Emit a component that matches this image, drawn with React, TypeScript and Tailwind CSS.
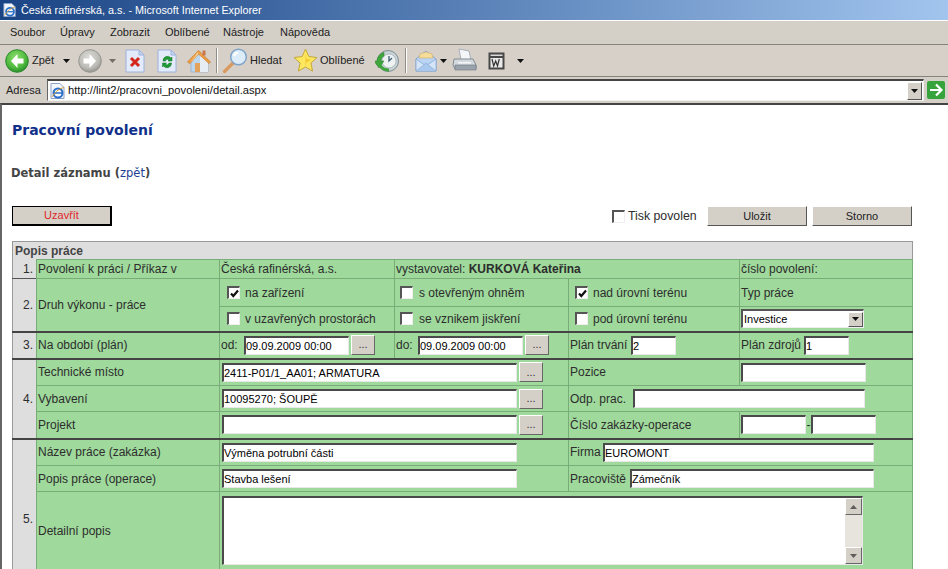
import type { ReactNode } from "react";

const sans = "font-['Liberation_Sans',Arial,sans-serif]";

function Arrow({ className = "" }: { className?: string }) {
  return (
    <svg className={className} width="7" height="4" viewBox="0 0 7 4" aria-hidden>
      <path d="M0 0h7L3.500 4z" fill="#111" />
    </svg>
  );
}

function RoundNav({ grey, dir }: { grey?: boolean; dir: "l" | "r" }) {
  const id = grey ? "navg" : "navc";
  return (
    <svg width="24" height="24" viewBox="0 0 24 24" aria-hidden>
      <defs>
        <radialGradient id={id} cx="45%" cy="35%" r="70%">
          <stop offset="0" stopColor={grey ? "#dcdcd8" : "#8fe070"} />
          <stop offset="0.65" stopColor={grey ? "#bdbcb7" : "#4db83c"} />
          <stop offset="1" stopColor={grey ? "#8b8a85" : "#22842a"} />
        </radialGradient>
      </defs>
      <circle cx="12" cy="12" r="11.300" fill={`url(#${id})`} stroke={grey ? "#96958f" : "#2f8a30"} />
      <path
        d={dir === "l" ? "M12.500 5 6 12l6.500 7v-4.500h6v-5h-6z" : "M11.500 5 18 12l-6.500 7v-4.500h-6v-5h6z"}
        fill="#fff"
      />
    </svg>
  );
}

function PageIcon({ children }: { children: ReactNode }) {
  return (
    <svg width="20" height="24" viewBox="0 0 20 24" aria-hidden>
      <path d="M1 1h13l5 5v17H1z" fill="#e3ebfa" stroke="#9db2dc" />
      <path d="M14 1v5h5z" fill="#c6d4f0" stroke="#9db2dc" />
      {children}
    </svg>
  );
}

function HomeIcon() {
  return (
    <svg width="24" height="24" viewBox="0 0 24 24" aria-hidden>
      <path d="M4 11v12h17V11l-8-7z" fill="#bcd6ee" stroke="#8ba7c4" strokeWidth="0.700" />
      <path d="M13 5 21 12v11h-8z" fill="#e6edf4" />
      <path d="M0.500 13 11.500 1.500 23.500 13l-1.500 1.500L11.500 5 3 14.500z" fill="#f0a045" stroke="#c47a2a" strokeWidth="0.700" />
      <path d="M3 14.500 11.500 5l-1-2z" fill="#f8c98a" />
      <rect x="15.500" y="1.500" width="3" height="5" fill="#c9764a" />
      <rect x="8" y="14" width="5" height="9" fill="#e2a25a" />
    </svg>
  );
}

function SearchIcon() {
  return (
    <svg width="26" height="26" viewBox="0 0 26 26" aria-hidden>
      <path d="M11 15 2.500 23.500" stroke="#d99a5f" strokeWidth="3.200" strokeLinecap="round" />
      <circle cx="16.500" cy="9" r="7.800" fill="#dcecf9" stroke="#7fa3c8" strokeWidth="1.500" />
      <path d="M12 8a5 5 0 0 1 4-3.500" stroke="#fff" strokeWidth="2" fill="none" />
    </svg>
  );
}

function StarIcon() {
  return (
    <svg width="25" height="25" viewBox="0 0 25 25" aria-hidden>
      <path
        d="m12.500 1 3.400 7.600 8.100.9-6.100 5.500 1.700 8.100-7.100-4.100-7.100 4.100 1.700-8.100L1 9.500l8.100-.9z"
        fill="#fce75e"
        stroke="#c4a83a"
      />
      <path d="m12.500 5 1 6 5 1-5 2-1 5z" fill="#f3c52e" />
    </svg>
  );
}

function MediaIcon() {
  return (
    <svg width="24" height="24" viewBox="0 0 24 24" aria-hidden>
      <circle cx="13" cy="12" r="10.500" fill="#c9d3d6" stroke="#7e8f96" />
      <circle cx="14" cy="12" r="7" fill="#eef2f3" stroke="#8fa0a6" strokeWidth="0.600" />
      <path d="M14 7v5l3-3" stroke="#3f5f76" strokeWidth="1.300" fill="none" />
      <path d="M2 12c0-4 3-7.500 7-8.500V7c-2 .8-3 2.800-3 5h3l-5 7-5-7z" fill="#3ea63b" stroke="#2a7a2d" strokeWidth="0.500" />
      <path d="M6 15c1.500 3 4 4.500 8 4.500v3c-5 0-9-2.500-10.500-6.500z" fill="#3ea63b" />
    </svg>
  );
}

function MailIcon() {
  return (
    <svg width="25" height="24" viewBox="0 0 25 24" aria-hidden>
      <path d="M2 10 12 2l10 8v12H2z" fill="#b9d4f4" stroke="#8aa8cf" />
      <path d="M5 9h14l-1-4-6-2-6 2z" fill="#f6dc9a" stroke="#cfae63" strokeWidth="0.600" />
      <path d="M2 10l10 7 10-7v12H2z" fill="#d4e5f9" stroke="#8aa8cf" strokeWidth="0.800" />
      <path d="m2 22 10-8 10 8" fill="#a9c8ee" stroke="#8aa8cf" strokeWidth="0.600" />
    </svg>
  );
}

function PrintIcon() {
  return (
    <svg width="25" height="25" viewBox="0 0 25 25" aria-hidden>
      <path d="M7 1l10 2 2 9H9z" fill="#f4f6f8" stroke="#a7afb8" />
      <path d="M2 11h19l3 6v4H3l-2-4z" fill="#d3d8dc" stroke="#838b93" />
      <path d="M3 17h21v5H3z" fill="#9aa3ab" stroke="#6f777f" strokeWidth="0.600" />
      <path d="M6 14h13v1.500H6z" fill="#f2f4f5" />
    </svg>
  );
}

function WordIcon() {
  return (
    <svg width="17" height="18" viewBox="0 0 17 18" aria-hidden>
      <rect x="0.500" y="0.500" width="16" height="17" fill="#484848" />
      <rect x="2.500" y="2.500" width="12" height="1.500" fill="#d8d8d8" />
      <rect x="2.500" y="6" width="12" height="9.500" fill="#e9e9e9" />
      <path d="m4 7 1.700 7 2-5 1.800 5 1.800-7" stroke="#333" strokeWidth="1.200" fill="none" />
    </svg>
  );
}

function IeIcon({ size }: { size: number }) {
  return (
    <svg width={size} height={size} viewBox="0 0 16 16" aria-hidden>
      <path d="M1 .500h9l4 4v11H1z" fill="#f3f6fc" stroke="#8ea2c8" />
      <circle cx="8" cy="10" r="4.500" fill="#fff" stroke="#2a6fc9" strokeWidth="2" />
      <path d="M3.500 10h9" stroke="#2a6fc9" strokeWidth="1.500" />
      <path d="M2 14c2-4 6-8 12-9.500" stroke="#d79a2a" strokeWidth="0.900" fill="none" />
    </svg>
  );
}

function Check({ on }: { on?: boolean }) {
  return (
    <span className="flex h-[13px] w-[13px] shrink-0 items-center justify-center border-t-2 border-l-2 border-t-[#555] border-l-[#555] border-r border-b border-r-[#eee] border-b-[#eee] bg-white">
      {on && (
        <svg width="9" height="9" viewBox="0 0 9 9" aria-hidden>
          <path d="M1 4.500 3.300 7 8 1.500" stroke="#111" strokeWidth="2.200" fill="none" />
        </svg>
      )}
    </span>
  );
}

function Field({ value, className = "" }: { value?: string; className?: string }) {
  return (
    <input
      readOnly
      value={value ?? ""}
      className={`h-[19px] shrink-0 border-t-2 border-l-2 border-t-[#4a4a4a] border-l-[#4a4a4a] border-r border-b border-r-[#e8e8e8] border-b-[#e8e8e8] bg-white px-0 text-[11px] text-black outline-none ${sans} ${className}`}
    />
  );
}

function Dots({ className = "" }: { className?: string }) {
  return (
    <span
      className={`flex h-[20px] w-[24px] shrink-0 items-center justify-center border border-t-[#fff] border-l-[#fff] border-r-[#666] border-b-[#666] bg-[#d4d0c8] pb-px text-[11px] text-[#333] ${className}`}
    >
      ...
    </span>
  );
}

function Btn({ children, className = "" }: { children: ReactNode; className?: string }) {
  return (
    <button className={`h-[20px] w-[100px] border border-t-[#fff] border-l-[#fff] border-r-[#555] border-b-[#555] bg-[#d4d0c8] text-[11px] text-[#222] ${className}`}>
      {children}
    </button>
  );
}

function Num({ n, rows }: { n: string; rows?: number }) {
  return (
    <td rowSpan={rows} className="bg-[#dedede] pr-[3px] text-right align-middle">
      {n}
    </td>
  );
}

const cell = "border border-[#78ad78] px-px align-middle whitespace-nowrap";

export default function App() {
  return (
    <div className={`h-[569px] w-[948px] overflow-hidden bg-white text-[12px] text-[#2d2d2d] ${sans}`}>
      {/* title bar */}
      <div className="flex h-[20px] items-center gap-[4px] bg-gradient-to-r from-[#1a4484] via-[#5a82b8] to-[#a2c5ee] pl-[3px] text-[10.800px] text-white">
        <IeIcon size={14} />
        <span>Česká rafinérská, a.s. - Microsoft Internet Explorer</span>
      </div>

      {/* menu */}
      <div className="flex h-[25px] items-center border-t border-t-white border-b border-b-[#85837c] bg-[#d4d0c8] pl-[10px] text-[11px] text-[#222]">
        <span className="w-[50px]">Soubor</span>
        <span className="w-[50px]">Úpravy</span>
        <span className="w-[55px]">Zobrazit</span>
        <span className="w-[58px]">Oblíbené</span>
        <span className="w-[57px]">Nástroje</span>
        <span>Nápověda</span>
      </div>

      {/* toolbar */}
      <div className="flex h-[32px] items-center border-b border-b-[#85837c] bg-[#d6d0c8] pl-[5px] text-[11px] text-[#222]">
        <RoundNav dir="l" />
        <span className="ml-[3px] w-[31px]">Zpět</span>
        <Arrow />
        <span className="ml-[8px]">
          <RoundNav grey dir="r" />
        </span>
        <Arrow className="ml-[7px] opacity-50" />
        <span className="ml-[9px]">
          <PageIcon>
            <path d="m6 9 8 8m0-8-8 8" stroke="#d4281c" strokeWidth="3" />
          </PageIcon>
        </span>
        <span className="ml-[12px]">
          <PageIcon>
            <path d="M6 12a4.500 4.500 0 0 1 8-3l1-1v4h-4l1-1a2 2 0 0 0-3.500 1zM14.500 14a4.500 4.500 0 0 1-8 3l-1 1v-4h4l-1 1a2 2 0 0 0 3.500-1z" fill="#1f9a35" stroke="#14762a" strokeWidth="0.500" />
          </PageIcon>
        </span>
        <span className="ml-[10px]">
          <HomeIcon />
        </span>
        <span className="ml-[5px] h-[25px] w-[2px] border-l border-l-[#8f8d86] border-r border-r-white" />
        <span className="ml-[4px]">
          <SearchIcon />
        </span>
        <span className="ml-[2px] w-[43px]">Hledat</span>
        <StarIcon />
        <span className="ml-[2px] w-[55px]">Oblíbené</span>
        <MediaIcon />
        <span className="ml-[6px] h-[25px] w-[2px] border-l border-l-[#8f8d86] border-r border-r-white" />
        <span className="ml-[7px]">
          <MailIcon />
        </span>
        <Arrow className="ml-[1px]" />
        <span className="ml-[5px]">
          <PrintIcon />
        </span>
        <span className="ml-[11px]">
          <WordIcon />
        </span>
        <Arrow className="ml-[12px]" />
      </div>

      {/* address bar */}
      <div className="flex h-[26px] items-center bg-[#d4d0c8] pl-[6px] text-[11px] text-[#222]">
        <span className="w-[41px]">Adresa</span>
        <div className="flex h-[22px] w-[877px] items-center border-t-2 border-l border-t-[#444] border-l-[#666] border-b border-r border-b-[#eee] border-r-[#eee] bg-white pl-[2px]">
          <IeIcon size={16} />
          <span className="ml-[2px] flex-1 text-[11.200px] text-[#111]">http://lint2/pracovni_povoleni/detail.aspx</span>
          <span className="mr-px flex h-[18px] w-[15px] items-center justify-center border border-t-white border-l-white border-r-[#555] border-b-[#555] bg-[#d4d0c8]">
            <Arrow />
          </span>
        </div>
        <svg className="ml-[3px]" width="18" height="18" viewBox="0 0 18 18" aria-hidden>
          <rect width="18" height="18" rx="2" fill="#37a33c" />
          <path d="M9 3.500 14.500 9 9 14.500M3 9h10" stroke="#fff" strokeWidth="2.200" fill="none" />
        </svg>
      </div>

      {/* page */}
      <div className="h-[466px] border-t-2 border-l-2 border-t-[#444] border-l-[#666] pl-[10px]">
        <h1 className="pt-[16px] font-['DejaVu_Sans',Verdana,sans-serif] text-[14px] leading-[18px] font-bold text-[#10308a]">
          Pracovní povolení
        </h1>
        <p className="pt-[26px] -ml-px font-['DejaVu_Sans',Verdana,sans-serif] text-[11.500px] leading-[16px] font-bold text-[#444]">
          Detail záznamu (<a className="font-normal text-[#1c3f94]">zpět</a>)
        </p>
        <div className="mt-[25px] flex h-[20px] w-[900px] items-center justify-between">
          <button className="h-[20px] w-[100px] border border-r-2 border-b-2 border-black bg-[#d4d0c8] text-[11px] text-[#e0262a]">
            Uzavřít
          </button>
          <div className="flex items-center">
            <Check />
            <span className="ml-[3px] w-[79px] text-[12.300px]">Tisk povolen</span>
            <Btn>Uložit</Btn>
            <Btn className="ml-[5px]">Storno</Btn>
          </div>
        </div>

        <table className="mt-[15px] w-[900px] table-fixed border-collapse border border-[#999]">
          <colgroup>
            <col className="w-[24px]" />
            <col className="w-[183px]" />
            <col className="w-[175px]" />
            <col className="w-[174px]" />
            <col className="w-[171px]" />
            <col className="w-[173px]" />
          </colgroup>
          <tbody className="bg-[#9fd99c]">
            <tr className="h-[18px]">
              <td colSpan={6} className="bg-[#dedede] pt-px pl-[2px] leading-[16px] font-bold text-[#444]">
                Popis práce
              </td>
            </tr>
            <tr className="h-[19px] border-b border-b-[#555]">
              <Num n="1." />
              <td className={cell}>Povolení k práci / Příkaz v</td>
              <td className={cell}>Česká rafinérská, a.s.</td>
              <td colSpan={2} className={cell}>
                vystavovatel: <b>KURKOVÁ Kateřina</b>
              </td>
              <td className={cell}>číslo povolení:</td>
            </tr>
            <tr className="h-[28px]">
              <Num n="2." rows={2} />
              <td rowSpan={2} className={cell}>
                Druh výkonu - práce
              </td>
              <td className={cell}>
                <div className="flex items-center gap-[5px] pl-[6px]">
                  <Check on />
                  na zařízení
                </div>
              </td>
              <td className={cell}>
                <div className="flex items-center gap-[6px] pl-[4px]">
                  <Check />s otevřeným ohněm
                </div>
              </td>
              <td className={cell}>
                <div className="flex items-center gap-[5px] pl-[5px]">
                  <Check on />
                  nad úrovní terénu
                </div>
              </td>
              <td className={cell}>Typ práce</td>
            </tr>
            <tr className="h-[25px] border-b-2 border-b-[#444]">
              <td className={cell}>
                <div className="flex items-center gap-[5px] pl-[6px]">
                  <Check />v uzavřených prostorách
                </div>
              </td>
              <td className={cell}>
                <div className="flex items-center gap-[6px] pl-[4px]">
                  <Check />
                  se vznikem jiskření
                </div>
              </td>
              <td className={cell}>
                <div className="flex items-center gap-[5px] pl-[5px]">
                  <Check />
                  pod úrovní terénu
                </div>
              </td>
              <td className={cell}>
                <div className="flex h-[19px] w-[123px] items-center border-t-2 border-l-2 border-t-[#555] border-l-[#555] border-b border-r border-b-[#eee] border-r-[#eee] bg-white pl-px text-[11px] text-black">
                  <span className="flex-1">Investice</span>
                  <span className="flex h-[15px] w-[15px] items-center justify-center border border-t-white border-l-white border-r-[#555] border-b-[#555] bg-[#d4d0c8]">
                    <Arrow />
                  </span>
                </div>
              </td>
            </tr>
            <tr className="h-[27px] border-b-2 border-b-[#444]">
              <Num n="3." />
              <td className={cell}>Na období (plán)</td>
              <td className={cell}>
                <div className="flex items-center">
                  <span className="w-[23px]">od:</span>
                  <Field value="09.09.2009 00:00" className="w-[105px]" />
                  <Dots className="ml-[2px]" />
                </div>
              </td>
              <td className={cell}>
                <div className="flex items-center">
                  <span className="w-[22px]">do:</span>
                  <Field value="09.09.2009 00:00" className="w-[105px]" />
                  <Dots className="ml-[2px]" />
                </div>
              </td>
              <td className={cell}>
                <div className="flex items-center">
                  <span className="w-[61px]">Plán trvání</span>
                  <Field value="2" className="w-[45px]" />
                </div>
              </td>
              <td className={cell}>
                <div className="flex items-center">
                  <span className="w-[63px]">Plán zdrojů</span>
                  <Field value="1" className="w-[45px]" />
                </div>
              </td>
            </tr>
            <tr className="h-[27px]">
              <Num n="4." rows={3} />
              <td className={cell}>Technické místo</td>
              <td colSpan={2} className={cell}>
                <div className="flex items-center pl-px">
                  <Field value="2411-P01/1_AA01; ARMATURA" className="w-[295px]" />
                  <Dots className="ml-[2px]" />
                </div>
              </td>
              <td className={cell}>Pozice</td>
              <td className={cell}>
                <Field className="w-[125px]" />
              </td>
            </tr>
            <tr className="h-[26px]">
              <td className={cell}>Vybavení</td>
              <td colSpan={2} className={cell}>
                <div className="flex items-center pl-px">
                  <Field value="10095270; ŠOUPĚ" className="w-[295px]" />
                  <Dots className="ml-[2px]" />
                </div>
              </td>
              <td colSpan={2} className={cell}>
                <div className="flex items-center">
                  <span className="w-[63px]">Odp. prac.</span>
                  <Field className="w-[232px]" />
                </div>
              </td>
            </tr>
            <tr className="h-[27px] border-b-2 border-b-[#444]">
              <td className={cell}>Projekt</td>
              <td colSpan={2} className={cell}>
                <div className="flex items-center pl-px">
                  <Field className="w-[295px]" />
                  <Dots className="ml-[2px]" />
                </div>
              </td>
              <td className={cell}>Číslo zakázky-operace</td>
              <td className={cell}>
                <div className="flex items-center">
                  <Field className="w-[65px]" />
                  <span className="w-[5px] text-center">-</span>
                  <Field className="w-[65px]" />
                </div>
              </td>
            </tr>
            <tr className="h-[27px]">
              <Num n="5." rows={4} />
              <td className={cell}>Název práce (zakázka)</td>
              <td colSpan={2} className={cell}>
                <div className="pl-px">
                  <Field value="Výměna potrubní části" className="w-[295px]" />
                </div>
              </td>
              <td colSpan={2} className={cell}>
                <div className="flex items-center">
                  <span className="w-[33px]">Firma</span>
                  <Field value="EUROMONT" className="w-[271px]" />
                </div>
              </td>
            </tr>
            <tr className="h-[26px]">
              <td className={cell}>Popis práce (operace)</td>
              <td colSpan={2} className={cell}>
                <div className="pl-px">
                  <Field value="Stavba lešení" className="w-[295px]" />
                </div>
              </td>
              <td colSpan={2} className={cell}>
                <div className="flex items-center">
                  <span className="w-[60px]">Pracoviště</span>
                  <Field value="Zámečník" className="w-[244px]" />
                </div>
              </td>
            </tr>
            <tr className="h-[78px]">
              <td className={cell}>Detailní popis</td>
              <td colSpan={4} className={cell}>
                <div className="ml-px flex h-[69px] w-[641px] border-t-2 border-l-2 border-t-[#4a4a4a] border-l-[#4a4a4a] border-b border-r border-b-[#e8e8e8] border-r-[#e8e8e8] bg-white">
                  <div className="flex-1" />
                  <div className="flex w-[17px] flex-col justify-between bg-[#e6e4dc]">
                    <span className="flex h-[17px] items-center justify-center border border-t-white border-l-white border-r-[#666] border-b-[#666] bg-[#d4d0c8]">
                      <Arrow className="rotate-180 opacity-60" />
                    </span>
                    <span className="flex h-[17px] items-center justify-center border border-t-white border-l-white border-r-[#666] border-b-[#666] bg-[#d4d0c8]">
                      <Arrow className="opacity-60" />
                    </span>
                  </div>
                </div>
              </td>
            </tr>
            <tr className="h-[30px]">
              <td colSpan={5} className={cell} />
            </tr>
          </tbody>
        </table>
      </div>
    </div>
  );
}
